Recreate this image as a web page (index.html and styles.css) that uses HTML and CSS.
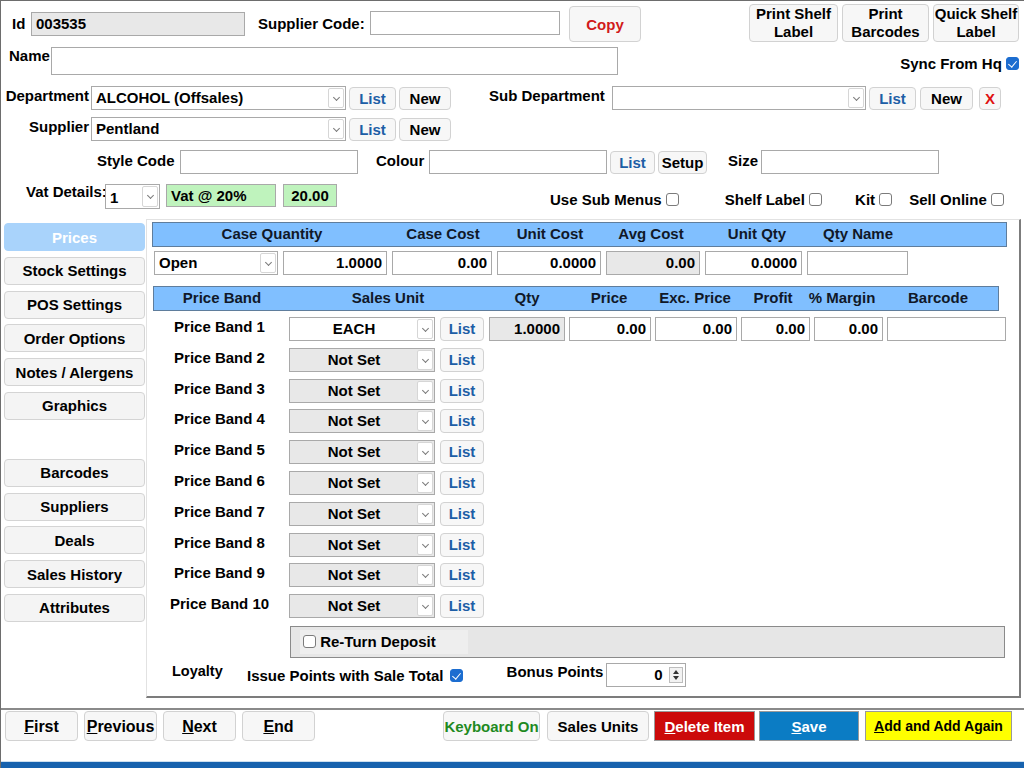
FILE: index.html
```html
<!DOCTYPE html>
<html lang="en">
<head>
    <meta charset="UTF-8">
    <title>Stock Item</title>
    <link rel="stylesheet" href="styles.css">
</head>
<body>
<div class="window">

    <!-- top form -->
    <div class="row row-id">
        <span class="lbl lbl-id">Id</span>
        <div class="box box-id disabled">003535</div>
        <span class="lbl lbl-supcode">Supplier Code:</span>
        <div class="box box-supcode"></div>
        <button class="btn btn-copy">Copy</button>
        <div class="spacer"></div>
        <button class="btn btn-print w89">Print Shelf<br>Label</button>
        <button class="btn btn-print w87">Print<br>Barcodes</button>
        <button class="btn btn-print w86">Quick Shelf<br>Label</button>
    </div>

    <div class="row row-name">
        <span class="lbl lbl-name">Name</span>
        <div class="box box-name"></div>
        <div class="spacer"></div>
        <span class="chk-line sync">Sync From Hq <span class="chk on"></span></span>
    </div>

    <div class="row row-dept">
        <span class="lbl lbl-col">Department</span>
        <div class="select w255"><span class="sel-text">ALCOHOL (Offsales)</span><span class="sel-arrow"></span></div>
        <button class="btn btn-small btn-list w47">List</button>
        <button class="btn btn-small w52">New</button>
        <span class="lbl lbl-subdept">Sub Department</span>
        <div class="select w254"><span class="sel-text"></span><span class="sel-arrow"></span></div>
        <button class="btn btn-small btn-list w47">List</button>
        <button class="btn btn-small w53 ml4">New</button>
        <button class="btn btn-small btn-x">X</button>
    </div>

    <div class="row row-supp">
        <span class="lbl lbl-col">Supplier</span>
        <div class="select w255"><span class="sel-text">Pentland</span><span class="sel-arrow"></span></div>
        <button class="btn btn-small btn-list w47">List</button>
        <button class="btn btn-small w52">New</button>
    </div>

    <div class="row row-style">
        <span class="lbl lbl-style">Style Code</span>
        <div class="box box-178"></div>
        <span class="lbl lbl-colour">Colour</span>
        <div class="box box-178"></div>
        <button class="btn btn-small btn-list w45 mt2">List</button>
        <button class="btn btn-small w49 mt2">Setup</button>
        <span class="lbl lbl-size">Size</span>
        <div class="box box-178 mt3"></div>
    </div>

    <div class="row row-vat">
        <span class="lbl lbl-vat">Vat Details:</span>
        <div class="select vat-sel"><span class="sel-text">1</span><span class="sel-arrow"></span></div>
        <div class="box green vat-name">Vat @ 20%</div>
        <div class="box green vat-rate">20.00</div>
        <span class="chk-line submenus">Use Sub Menus <span class="chk"></span></span>
        <span class="chk-line shelf">Shelf Label <span class="chk"></span></span>
        <span class="chk-line kit">Kit <span class="chk"></span></span>
        <span class="chk-line online">Sell Online <span class="chk"></span></span>
    </div>

    <!-- main area -->
    <div class="main">
        <div class="nav">
            <button class="nav-btn active">Prices</button>
            <button class="nav-btn">Stock Settings</button>
            <button class="nav-btn">POS Settings</button>
            <button class="nav-btn">Order Options</button>
            <button class="nav-btn">Notes / Alergens</button>
            <button class="nav-btn">Graphics</button>
            <button class="nav-btn nav-gap">Barcodes</button>
            <button class="nav-btn">Suppliers</button>
            <button class="nav-btn">Deals</button>
            <button class="nav-btn">Sales History</button>
            <button class="nav-btn">Attributes</button>
        </div>

        <div class="panel">
            <div class="head head-cost">
                <span class="span2">Case Quantity</span>
                <span>Case Cost</span>
                <span>Unit Cost</span>
                <span>Avg Cost</span>
                <span>Unit Qty</span>
                <span>Qty Name</span>
            </div>
            <div class="cost-row">
                <div class="select"><span class="sel-text">Open</span><span class="sel-arrow"></span></div>
                <div class="box num">1.0000</div>
                <div class="box num">0.00</div>
                <div class="box num">0.0000</div>
                <div class="box num disabled">0.00</div>
                <div class="box num">0.0000</div>
                <div class="box"></div>
            </div>

            <div class="head head-price">
                <span>Price Band</span>
                <span>Sales Unit</span>
                <span>Qty</span>
                <span>Price</span>
                <span>Exc. Price</span>
                <span>Profit</span>
                <span>% Margin</span>
                <span>Barcode</span>
            </div>

            <div class="price-grid" id="priceGrid">
                <span class="band-lbl">Price Band 1</span>
                <div class="select center"><span class="sel-text">EACH</span><span class="sel-arrow"></span></div>
                <button class="btn btn-small btn-list">List</button>
                <div class="box num disabled">1.0000</div>
                <div class="box num">0.00</div>
                <div class="box num">0.00</div>
                <div class="box num">0.00</div>
                <div class="box num">0.00</div>
                <div class="box"></div>
            </div>

            <div class="deposit">
                <div class="deposit-inner"><span class="chk"></span> Re-Turn Deposit</div>
            </div>

            <div class="loyalty">
                <span class="lbl lbl-loyalty">Loyalty</span>
                <span class="chk-line issue">Issue Points with Sale Total <span class="chk on"></span></span>
                <span class="lbl lbl-bonus">Bonus Points</span>
                <div class="box num spin">0<span class="spin-btn"><i class="up"></i><i class="down"></i></span></div>
            </div>
        </div>
    </div>

    <!-- footer -->
    <div class="footer">
        <button class="btn foot-btn"><u>F</u>irst</button>
        <button class="btn foot-btn"><u>P</u>revious</button>
        <button class="btn foot-btn"><u>N</u>ext</button>
        <button class="btn foot-btn"><u>E</u>nd</button>
        <div class="spacer"></div>
        <button class="btn foot-btn btn-keyboard">Keyboard On</button>
        <button class="btn foot-btn btn-units">Sales Units</button>
        <button class="btn foot-btn btn-delete"><u>D</u>elete Item</button>
        <button class="btn foot-btn btn-save"><u>S</u>ave</button>
        <button class="btn foot-btn btn-add"><u>A</u>dd and Add Again</button>
    </div>
    <div class="statusbar"></div>
</div>

<script>
    // price bands 2..10 are not set
    const grid = document.getElementById('priceGrid');
    for (let i = 2; i <= 10; i++) {
        grid.insertAdjacentHTML('beforeend', `
            <span class="band-lbl">Price Band ${i}</span>
            <div class="select center disabled"><span class="sel-text">Not Set</span><span class="sel-arrow"></span></div>
            <button class="btn btn-small btn-list">List</button>
            <span class="fill"></span>
        `);
    }
</script>
</body>
</html>
```

FILE: styles.css
```css
* {
    margin: 0;
    padding: 0;
    box-sizing: border-box;
}

body {
    font-family: "Liberation Sans", Arial, sans-serif;
    font-size: 15px;
    font-weight: bold;
    color: #000;
    background: #fff;
    width: 1024px;
    height: 768px;
    overflow: hidden;
}

.window {
    height: 768px;
    border-top: 1px solid #6d6d6d;
    border-left: 1px solid #6d6d6d;
    display: flex;
    flex-direction: column;
}

.row {
    display: flex;
    align-items: flex-start;
}

.spacer {
    flex: 1;
}

.lbl {
    line-height: 17px;
    white-space: nowrap;
}

/* generic controls */
.box {
    height: 24px;
    border: 1px solid #a9a9a9;
    background: #fff;
    line-height: 22px;
    padding: 0 4px;
    white-space: nowrap;
    overflow: hidden;
}

.box.disabled, .select.disabled {
    background: #e8e8e8;
}

.box.num {
    text-align: right;
}

.box.green {
    background: #bff3bd;
    border-color: #a9a9a9;
}

.select {
    position: relative;
    height: 24px;
    border: 1px solid #a9a9a9;
    background: #fff;
    line-height: 22px;
    padding: 0 20px 0 4px;
    white-space: nowrap;
}

.select.center {
    text-align: center;
}

.sel-arrow {
    position: absolute;
    right: 1px;
    top: 1px;
    bottom: 1px;
    width: 16px;
    border: 1px solid #d6d6d6;
    border-radius: 2px;
    background: #fff;
}

.sel-arrow::after {
    content: "";
    position: absolute;
    left: 5px;
    top: 6px;
    width: 4px;
    height: 4px;
    border-right: 1px solid #7a7a7a;
    border-bottom: 1px solid #7a7a7a;
    transform: rotate(45deg);
}

.btn {
    font-family: inherit;
    font-size: 15px;
    font-weight: bold;
    color: #000;
    background: #f7f7f7;
    border: 1px solid #d2d2d2;
    border-radius: 4px;
    cursor: pointer;
    line-height: 17px;
    white-space: nowrap;
}

.btn-small {
    height: 23px;
    margin-top: 1px;
    margin-left: 3px;
    line-height: 20px;
}

.btn-list {
    color: #1d5ea6;
}

.chk {
    display: inline-block;
    width: 13px;
    height: 13px;
    border: 1px solid #7b7b7b;
    border-radius: 3px;
    background: #fff;
    vertical-align: -1px;
    position: relative;
}

.chk.on {
    background: #1c6dd0;
    border-color: #1c6dd0;
}

.chk.on::after {
    content: "";
    position: absolute;
    left: 3px;
    top: 1px;
    width: 4px;
    height: 7px;
    border-right: 1.5px solid #fff;
    border-bottom: 1.5px solid #fff;
    transform: rotate(40deg);
}

.chk-line {
    line-height: 17px;
    white-space: nowrap;
}

/* widths */
.w45 { width: 45px; }
.w47 { width: 47px; }
.w49 { width: 49px; }
.w52 { width: 52px; }
.w53 { width: 53px; }
.w86 { width: 86px; }
.w87 { width: 87px; }
.w89 { width: 89px; }
.w254 { width: 254px; }
.w255 { width: 255px; }
.ml4 { margin-left: 4px; }
.mt2 { margin-top: 2px; }
.mt3 { margin-top: 3px; }

/* row: id */
.row-id {
    height: 38px;
    margin-top: 3px;
    align-items: center;
}

.lbl-id {
    margin-left: 11px;
    width: 19px;
}

.box-id {
    width: 214px;
    margin-top: 1px;
}

.lbl-supcode {
    margin-left: 13px;
    width: 112px;
}

.box-supcode {
    width: 190px;
}

.btn-copy {
    margin-left: 9px;
    width: 72px;
    height: 36px;
    margin-top: 2px;
    color: #d11a1a;
}

.btn-print {
    height: 38px;
    margin-left: 4px;
    line-height: 18px;
}

.btn-print.w89 {
    margin-left: 0;
}

.btn-print.w86 {
    margin-right: 5px;
}

/* row: name */
.row-name {
    margin-top: 5px;
}

.lbl-name {
    margin-left: 8px;
    width: 42px;
}

.box-name {
    width: 567px;
    height: 28px;
}

.sync {
    margin-top: 8px;
    margin-right: 5px;
}

/* department / supplier */
.row-dept {
    margin-top: 11px;
}

.row-supp {
    margin-top: 7px;
}

.lbl-col {
    width: 90px;
    text-align: right;
    padding-right: 2px;
    margin-top: 1px;
}

.lbl-subdept {
    margin-left: 38px;
    width: 123px;
    margin-top: 1px;
}

.btn-x {
    margin-left: 6px;
    width: 22px;
    color: #e01010;
    padding: 0;
}

/* style / colour / size */
.row-style {
    margin-top: 8px;
}

.lbl-style {
    margin-left: 96px;
    width: 83px;
    margin-top: 3px;
}

.box-178 {
    width: 178px;
    margin-top: 1px;
}

.lbl-colour {
    margin-left: 18px;
    width: 53px;
    margin-top: 3px;
}

.lbl-size {
    margin-left: 21px;
    width: 33px;
    margin-top: 3px;
}

/* vat row */
.row-vat {
    margin-top: 9px;
}

.lbl-vat {
    margin-left: 25px;
    width: 79px;
    margin-top: 0;
}

.vat-sel {
    width: 55px;
    height: 25px;
    margin-top: 1px;
    line-height: 26px;
}

.vat-name {
    margin-left: 6px;
    width: 110px;
    height: 23px;
    margin-top: 1px;
}

.vat-rate {
    margin-left: 7px;
    width: 54px;
    height: 23px;
    margin-top: 1px;
    text-align: center;
}

.submenus {
    margin-left: 213px;
    margin-top: 8px;
}

.shelf {
    margin-left: 46px;
    margin-top: 8px;
}

.kit {
    margin-left: 33px;
    margin-top: 8px;
}

.online {
    margin-left: 17px;
    margin-top: 8px;
}

/* main area */
.main {
    display: flex;
    margin-top: 10px;
    height: 479px;
}

.nav {
    width: 145px;
    padding: 4px 0 0 3px;
    display: flex;
    flex-direction: column;
    gap: 5.8px;
}

.nav-btn {
    width: 141px;
    height: 28px;
    font-family: inherit;
    font-size: 15px;
    font-weight: bold;
    background: #f4f4f4;
    border: 1px solid #d4d4d4;
    border-radius: 4px;
    color: #000;
}

.nav-btn.active {
    background: #a9d3fb;
    border-color: #a9d3fb;
    color: #fff;
}

.nav-gap {
    margin-top: 33px;
}

.panel {
    width: 875px;
    border-top: 1px solid #e2e2e2;
    border-left: 1px solid #e2e2e2;
    border-right: 2px solid #7c7c7c;
    border-bottom: 2px solid #7c7c7c;
    padding: 2px 0 0 5px;
}

.head {
    display: grid;
    height: 25px;
    background: #80bfff;
    border: 1px solid #5f7d9c;
    color: #101828;
    line-height: 22px;
    text-align: center;
    white-space: nowrap;
}

.head-cost {
    width: 855px;
    grid-template-columns: 238px 104px 110px 92px 120px 82px;
}

.cost-row {
    display: grid;
    grid-template-columns: 124px 104px 100px 104px 94px 97px 101px;
    column-gap: 5px;
    margin: 4px 0 0 2px;
}

.cost-row .select {
    text-align: left;
}

.head-price {
    width: 846px;
    margin: 11px 0 0 1px;
    grid-template-columns: 136px 196px 82px 82px 90px 66px 72px 1fr;
}

.price-grid {
    display: grid;
    grid-template-columns: 133px 146px 46px 76px 82px 82px 69px 69px 119px;
    column-gap: 4px;
    grid-auto-rows: 24px;
    row-gap: 6.8px;
    margin-top: 6px;
}

.price-grid .btn-list {
    margin: 0 1px 0 1px;
    height: 24px;
}

.band-lbl {
    text-align: center;
    line-height: 17px;
    margin-top: 1px;
    padding-left: 2px;
    white-space: nowrap;
}

.fill {
    grid-column: span 6;
}

.deposit {
    margin: 8px 0 0 138px;
    width: 715px;
    height: 32px;
    background: #e6e6e6;
    border: 1px solid #8a8a8a;
    padding: 3px 0 0 9px;
}

.deposit-inner {
    width: 168px;
    height: 24px;
    background: #eeeeee;
    line-height: 24px;
    padding-left: 3px;
}

.loyalty {
    display: flex;
    align-items: flex-start;
    margin-top: 5px;
}

.lbl-loyalty {
    margin-left: 20px;
    width: 55px;
    font-size: 14.5px;
}

.issue {
    margin-left: 20px;
    margin-top: 4px;
}

.issue .chk {
    margin-left: 2px;
}

.lbl-bonus {
    margin-left: 44px;
    width: 99px;
}

.spin {
    position: relative;
    width: 80px;
    padding-right: 22px;
}

.spin-btn {
    position: absolute;
    right: 2px;
    top: 3px;
    width: 14px;
    height: 16px;
    border: 1px solid #bdbdbd;
    background: #f2f2f2;
}

.spin-btn i {
    position: absolute;
    left: 3px;
    width: 0;
    height: 0;
    border-left: 3px solid transparent;
    border-right: 3px solid transparent;
}

.spin-btn .up {
    top: 2px;
    border-bottom: 4px solid #333;
}

.spin-btn .down {
    bottom: 2px;
    border-top: 4px solid #333;
}

/* footer */
.footer {
    margin-top: 10px;
    border-top: 2px solid #8a8a8a;
    display: flex;
    padding: 1px 0 0 4px;
    height: 53px;
}

.foot-btn {
    height: 30px;
    width: 73px;
    margin-right: 6px;
    font-size: 16px;
}

.btn-keyboard {
    width: 97px;
    color: #1f8a1f;
    margin-right: 7px;
    font-size: 15px;
}

.btn-units {
    width: 102px;
    margin-right: 5px;
    font-size: 15px;
}

.btn-delete {
    width: 101px;
    background: #cc0a0a;
    border-color: #9a9a9a;
    border-radius: 0;
    color: #fff;
    margin-right: 4px;
    font-size: 15px;
}

.btn-save {
    width: 100px;
    background: #0b7cc4;
    border-color: #9a9a9a;
    border-radius: 0;
    color: #fff;
    margin-right: 6px;
    font-size: 15px;
}

.btn-add {
    width: 147px;
    background: #ffff00;
    border-color: #9a9a9a;
    border-radius: 0;
    margin-right: 12px;
    font-size: 14px;
}

.statusbar {
    flex: 1;
    background: #1762ae;
    border-top: 1px solid #cde0f0;
}
```
